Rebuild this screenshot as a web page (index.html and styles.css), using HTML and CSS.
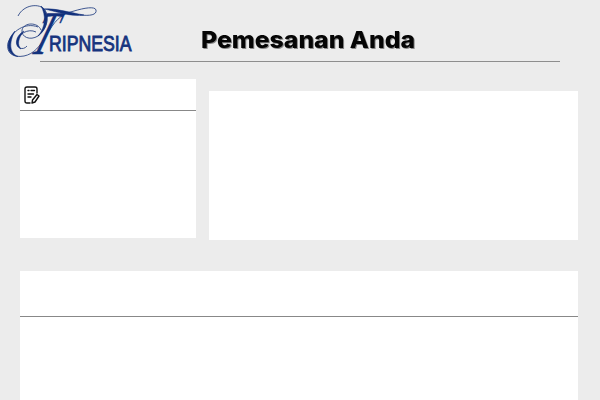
FILE: index.html
```html
<!DOCTYPE html>
<html lang="id">
<head>
<meta charset="utf-8">
<title>Pemesanan Anda</title>
<link rel="stylesheet" href="styles.css">
</head>
<body>
<header class="header">
  <svg class="logo" width="140" height="61" viewBox="0 0 140 61" role="img" aria-label="Tripnesia">
    <g class="flourish">
      <path d="M18 16C24 4 40 3 45 10C50 18 46 30 38 36C30 41 21 37 22 30C24 22 38 22 41 30"/>
      <path d="M38 27C25 22 12 31 8 43C6 53 13 58 24 56C34 54 40 46 46 36C54 22 60 14 74 11C84 8 95 6 96 10C97 15 90 16 80 15"/>
      <path d="M36 32C28 28 18 34 17 42C16 48 23 51 27 46"/>
    </g>
    <g class="swell">
      <path d="M41 6C50 13 49 28 38 36C46 27 46 15 41 6Z"/>
      <path d="M44 9C55 8 67 12 84 15C69 17 55 11 44 9Z"/>
      <path d="M15 31C4 43 7 55 18 56.500C9 53 9 42 15 31Z"/>
      <path d="M24 31C15 36 14 46 21 49C17 45 18 38 24 31Z"/>
    </g>
    <text class="initial" transform="translate(29 54) skewX(-20) scale(.56 1)">T</text>
    <text class="wordmark" transform="translate(49 50.5) scale(.8 1)" textLength="103" lengthAdjust="spacingAndGlyphs">RIPNESIA</text>
  </svg>
  <h1 class="title">
    <svg width="220" height="40" viewBox="0 0 220 40">
      <text class="title-text" x="0" y="28" textLength="214" lengthAdjust="spacingAndGlyphs">Pemesanan Anda</text>
    </svg>
  </h1>
</header>
<main class="content">
  <div class="top-row">
    <section class="card order">
      <div class="order-head">
        <svg class="note" width="18" height="20" viewBox="0 0 18 20">
          <path d="M7 18H4Q2 18 2 16V4Q2 2 4 2H12Q14 2 14 4V8M5 5.500H6M8 5.500H11.500M5 9H10.500M5 12H8M9 18L9.500 15L14 9.500L16 11L12 17Z"/>
        </svg>
      </div>
    </section>
    <section class="card detail"></section>
  </div>
  <section class="card summary"><div class="summary-head"></div></section>
</main>
</body>
</html>
```

FILE: styles.css
```css
* { box-sizing: border-box; }
body {
  margin: 0;
  height: 400px;
  overflow: hidden;
  background: #ececec;
  font-family: Inter, "Open Sans", sans-serif;
}
.header {
  display: flex;
  height: 62px;
  background: linear-gradient(#8e8e8e, #8e8e8e) 40px 61px / 520px 1px no-repeat;
}
.logo, .title svg, .note { display: block; overflow: visible; }
.flourish { fill: none; stroke: #2b4686; stroke-width: .9; }
.swell { fill: #12317c; stroke: #12317c; stroke-width: .5; }
.initial { font: italic 62px "Liberation Serif", serif; fill: #12317c; stroke: #12317c; stroke-width: .5; }
.wordmark { font: 22px "Liberation Sans", sans-serif; fill: #16347e; stroke: #16347e; stroke-width: .9; }
.title { margin: 20px 0 0 61px; height: 40px; }
.title-text {
  font: 800 23px Inter, "Open Sans", sans-serif;
  fill: #050505;
  filter: drop-shadow(1px 1px .5px #888);
}
.content { padding: 17px 22px 0 20px; }
.top-row { display: flex; gap: 13px; }
.card { background: #fff; }
.order { width: 176px; height: 159px; }
.order-head { height: 32px; padding: 6px 0 0 3px; border-bottom: 1px solid #888; }
.note path { fill: none; stroke: #111; stroke-width: 1.4; stroke-linecap: round; stroke-linejoin: round; }
.detail { flex: 1; height: 149px; margin-top: 12px; }
.summary { height: 130px; margin-top: 31px; }
.summary-head { height: 46px; border-bottom: 1px solid #888; }
```
